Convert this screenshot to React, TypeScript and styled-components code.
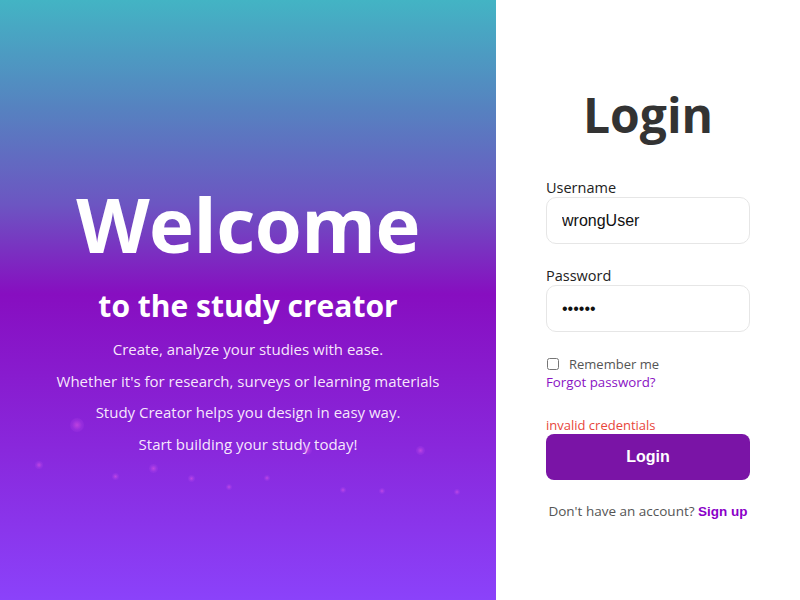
import React from "react";
import styled, { createGlobalStyle } from "styled-components";

const Global = createGlobalStyle`
  html, body { margin: 0; padding: 0; }
  body { font-family: "Open Sans", "Noto Sans", sans-serif; }
  * { box-sizing: border-box; }
`;

const Page = styled.div`
  display: flex;
  width: 800px;
  height: 600px;
  overflow: hidden;
`;

const Hero = styled.section`
  position: relative;
  width: 496px;
  height: 600px;
  display: flex;
  flex-direction: column;
  align-items: center;
  justify-content: flex-start;
  padding-top: 178px;
  color: #fff;
  background: linear-gradient(
    180deg,
    rgb(67, 180, 196) 0%,
    rgb(86, 130, 192) 18%,
    rgb(108, 86, 194) 34%,
    rgb(135, 14, 192) 49%,
    rgb(137, 40, 220) 75%,
    rgb(139, 66, 250) 100%
  );
`;

const Title = styled.h1`
  margin: 0;
  font-size: 76px;
  font-weight: 700;
  line-height: 1.2;
  letter-spacing: -0.5px;
`;

const Subtitle = styled.h2`
  margin: 17px 0 9px;
  font-size: 30px;
  font-weight: 700;
  line-height: 1.3;
`;

const Line = styled.p`
  margin: 0;
  font-size: 15px;
  line-height: 31.5px;
  color: rgba(255, 245, 255, 0.95);
`;

const Spark = styled.span<{ $s: number }>`
  position: absolute;
  width: ${(p) => p.$s}px;
  height: ${(p) => p.$s}px;
  border-radius: 50%;
  background: radial-gradient(circle, rgba(230, 90, 230, 0.55) 0%, rgba(200, 80, 240, 0.2) 50%, rgba(200, 80, 240, 0) 100%);
  pointer-events: none;
`;

const Side = styled.section`
  width: 304px;
  height: 600px;
  background: #fff;
  display: flex;
  flex-direction: column;
  align-items: center;
  padding-top: 84px;
`;

const Form = styled.form`
  width: 204px;
  display: flex;
  flex-direction: column;
`;

const Heading = styled.h2`
  margin: 0 0 33px;
  text-align: center;
  font-size: 48px;
  font-weight: 700;
  color: #333;
  line-height: 1.3;
`;

const Field = styled.div`
  display: flex;
  flex-direction: column;
  margin-bottom: 23px;
`;

const Label = styled.label`
  font-size: 14.5px;
  color: #222;
  line-height: 18px;
`;

const Input = styled.input`
  height: 47px;
  width: 100%;
  border: 1px solid #e6e6e6;
  border-radius: 10px;
  padding: 0 15px;
  font-family: "Liberation Sans", Arial, sans-serif;
  font-size: 16px;
  color: #111;
  background: #fff;
  outline: none;
`;

const CheckRow = styled.label`
  display: flex;
  align-items: center;
  gap: 10px;
  font-size: 13px;
  color: #555;
  line-height: 18px;
`;

const Box = styled.input`
  margin: 0 0 0 1px;
  width: 12px;
  height: 12px;
`;

const Forgot = styled.a`
  font-size: 13.3px;
  line-height: 18px;
  color: #8a12c4;
  text-decoration: none;
`;

const ErrorText = styled.div`
  margin-top: 26px;
  font-size: 13px;
  line-height: 17px;
  color: #e8453c;
`;

const Button = styled.button`
  height: 46px;
  width: 100%;
  border: none;
  border-radius: 8px;
  background: #7a14a6;
  color: #fff;
  font-family: "Liberation Sans", Arial, sans-serif;
  font-weight: 700;
  font-size: 16px;
`;

const Footer = styled.p`
  margin: 22px 0 0;
  text-align: center;
  font-size: 13.5px;
  color: #555;
`;

const SignUp = styled.a`
  font-family: "Liberation Sans", Arial, sans-serif;
  font-weight: 700;
  color: #8a00c8;
  text-decoration: none;
`;

const sparks: [number, number, number][] = [
  [77, 425, 14],
  [39, 465, 8],
  [153, 468, 9],
  [115, 476, 7],
  [191, 478, 7],
  [229, 487, 6],
  [267, 478, 6],
  [307, 450, 10],
  [343, 490, 6],
  [382, 491, 6],
  [420, 450, 9],
  [457, 492, 6],
];

export default function App() {
  return (
    <Page>
      <Global />
      <Hero>
        {sparks.map(([x, y, s], i) => (
          <Spark key={i} $s={s} style={{ left: x - s / 2, top: y - s / 2 }} />
        ))}
        <Title>Welcome</Title>
        <Subtitle>to the study creator</Subtitle>
        <Line>Create, analyze your studies with ease.</Line>
        <Line>Whether it's for research, surveys or learning materials</Line>
        <Line>Study Creator helps you design in easy way.</Line>
        <Line>Start building your study today!</Line>
      </Hero>
      <Side>
        <Form onSubmit={(e) => e.preventDefault()}>
          <Heading>Login</Heading>
          <Field>
            <Label>Username</Label>
            <Input type="text" defaultValue="wrongUser" />
          </Field>
          <Field>
            <Label>Password</Label>
            <Input type="password" defaultValue="secret" />
          </Field>
          <CheckRow>
            <Box type="checkbox" />
            Remember me
          </CheckRow>
          <Forgot href="#">Forgot password?</Forgot>
          <ErrorText>invalid credentials</ErrorText>
          <Button type="submit">Login</Button>
          <Footer>
            Don't have an account? <SignUp href="#">Sign up</SignUp>
          </Footer>
        </Form>
      </Side>
    </Page>
  );
}
